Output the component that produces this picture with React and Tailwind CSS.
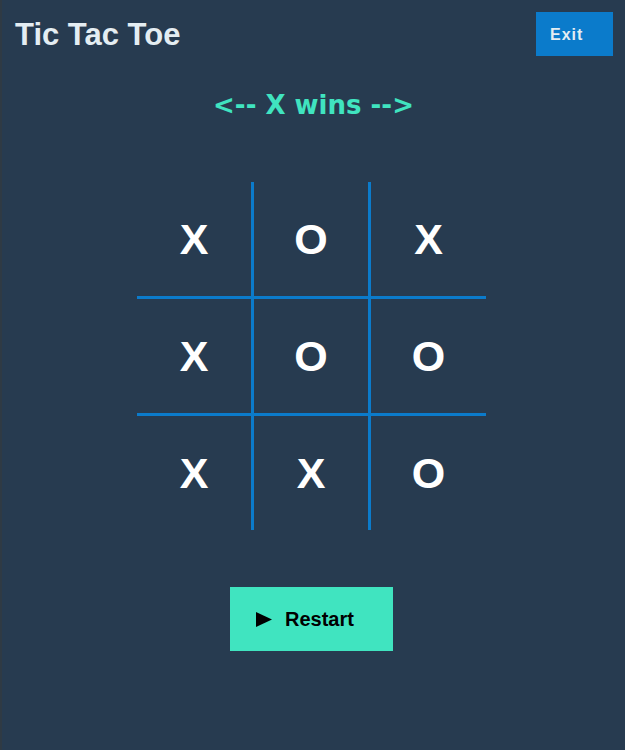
import React from 'react';

const board = ['X', 'O', 'X', 'X', 'O', 'O', 'X', 'X', 'O'];

// grid lines are the right/bottom borders of the inner cells
const cellBorder = (i) => {
  const col = i % 3;
  const row = Math.floor(i / 3);
  if (col < 2 && row < 2) return 'border-r-[3px] border-b-[3px]';
  if (col < 2) return 'border-r-[3px]';
  if (row < 2) return 'border-b-[3px]';
  return '';
};

const Cell = ({ value, index }) => (
  <div className={`flex items-center justify-center border-[#0b7bcb] ${cellBorder(index)}`}>
    <span className="text-[43px] font-bold leading-none text-white">{value}</span>
  </div>
);

export default function App() {
  return (
    <div
      className="flex h-[750px] w-[625px] border-l-2 border-[#2f3a44] bg-[#273b50]"
      style={{ fontFamily: '"Liberation Sans", Arial, sans-serif' }}
    >
      <div className="flex w-full flex-col">
        {/* Header */}
        <div className="flex items-start justify-between pl-[13px] pr-[12px] pt-3">
          <h1 className="pt-[7px] text-[31px] font-bold leading-none text-[#e4edf2]">Tic Tac Toe</h1>
          <button className="flex h-[44px] w-[77px] items-center bg-[#0b7bcb] pl-[14px] pt-[2px] text-[16px] font-bold tracking-[1px] text-[#e4edf2]">
            Exit
          </button>
        </div>

        {/* Status */}
        <div
          className="mt-[36px] text-center text-[26px] font-bold leading-none text-[#40e4c0]"
          style={{ fontFamily: '"DejaVu Sans", Verdana, sans-serif' }}
        >
          &lt;-- X wins --&gt;
        </div>

        {/* Board */}
        <div className="mt-[64px] flex justify-center">
          <div className="ml-[-4px] grid h-[348px] w-[349px] grid-cols-[117px_117px_115px] grid-rows-[117px_117px_114px]">
            {board.map((v, i) => (
              <Cell key={i} value={v} index={i} />
            ))}
          </div>
        </div>

        {/* Restart */}
        <div className="mt-[57px] flex justify-center">
          <button className="ml-[-4px] flex h-[64px] w-[163px] items-center bg-[#40e4c0] pl-[26px] text-[20px] font-bold text-black">
            <svg width="16" height="15" viewBox="0 0 16 15" className="mr-[13px]">
              <path d="M0 0 L16 7.5 L0 15 Z" fill="#000" />
            </svg>
            Restart
          </button>
        </div>
      </div>
    </div>
  );
}
